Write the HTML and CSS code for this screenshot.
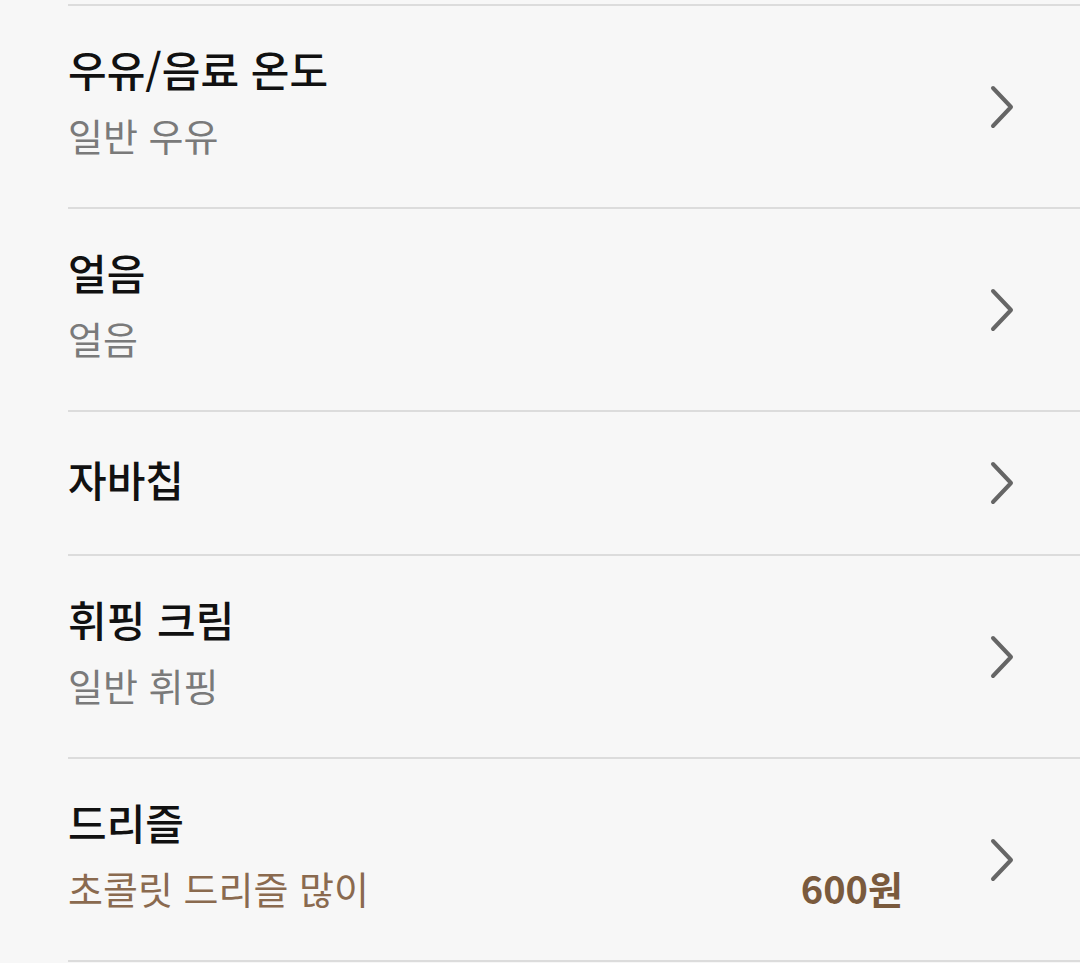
FILE: index.html
```html
<!DOCTYPE html>
<html lang="ko">
<head>
<meta charset="utf-8">
<link rel="stylesheet" href="styles.css">
</head>
<body>
<div class="list">
  <div class="row two">
    <div class="texts">
      <div class="title">우유/음료 온도</div>
      <div class="sub">일반 우유</div>
    </div>
    <svg class="chev" viewBox="0 0 24 44"><path d="M3 3 L21 22 L3 41"/></svg>
  </div>
  <div class="row two">
    <div class="texts">
      <div class="title">얼음</div>
      <div class="sub">얼음</div>
    </div>
    <svg class="chev" viewBox="0 0 24 44"><path d="M3 3 L21 22 L3 41"/></svg>
  </div>
  <div class="row one">
    <div class="texts">
      <div class="title">자바칩</div>
    </div>
    <svg class="chev" viewBox="0 0 24 44"><path d="M3 3 L21 22 L3 41"/></svg>
  </div>
  <div class="row two">
    <div class="texts">
      <div class="title">휘핑 크림</div>
      <div class="sub">일반 휘핑</div>
    </div>
    <svg class="chev" viewBox="0 0 24 44"><path d="M3 3 L21 22 L3 41"/></svg>
  </div>
  <div class="row two">
    <div class="texts">
      <div class="title">드리즐</div>
      <div class="sub brown"><span>초콜릿 드리즐 많이</span><span class="price">600원</span></div>
    </div>
    <svg class="chev" viewBox="0 0 24 44"><path d="M3 3 L21 22 L3 41"/></svg>
  </div>
</div>
</body>
</html>
```
FILE: styles.css
```css
html, body {
  margin: 0;
  padding: 0;
  background: #f7f7f7;
}
body {
  font-family: "Noto Sans CJK KR", "Noto Sans", sans-serif;
  width: 1080px;
  height: 963px;
  overflow: hidden;
}
.list {
  padding-top: 6px;
  margin-left: 68px;
}
.list::before {
  content: "";
  display: block;
  height: 2px;
  background: #dcdcdc;
  margin-top: -2px;
}
.row {
  display: flex;
  align-items: center;
  border-bottom: 2px solid #dcdcdc;
  box-sizing: border-box;
  padding-right: 66px;
}
.row.two { height: 203px; }
.row.one { height: 144px; }
.texts {
  flex: 1;
  display: flex;
  flex-direction: column;
  gap: 16px;
  margin-top: -9px;
}
.title {
  font-size: 42px;
  font-weight: 500;
  color: #111;
  line-height: 50px;
}
.sub {
  font-size: 38px;
  color: #7a7a7a;
  line-height: 50px;
  display: flex;
  justify-content: space-between;
  padding-right: 87px;
}
.sub.brown { color: #8a6a4f; }
.price {
  font-weight: 700;
  color: #7a5a3d;
}
.chev {
  width: 24px;
  height: 44px;
  fill: none;
  stroke: #666;
  stroke-width: 4;
  stroke-linecap: round;
  stroke-linejoin: round;
}
```
